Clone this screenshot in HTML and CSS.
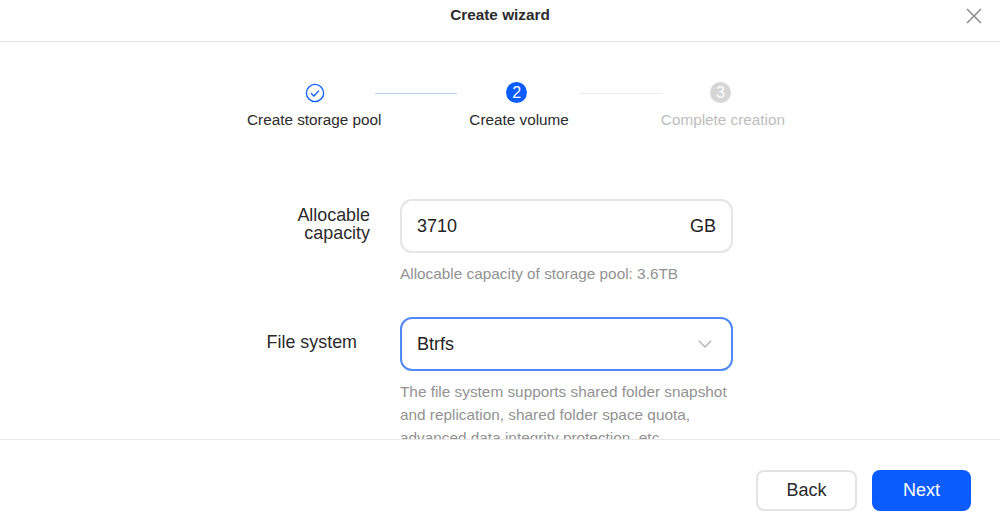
FILE: index.html
```html
<!DOCTYPE html>
<html lang="en">
<head>
<meta charset="utf-8">
<title>Create wizard</title>
<link rel="stylesheet" href="styles.css">
</head>
<body>
<div class="dialog">
  <header class="header">
    <h1 class="title">Create wizard</h1>
    <button class="close" aria-label="Close">
      <svg width="16" height="16" viewBox="0 0 16 16"><path d="M1 1 15 15M15 1 1 15" fill="none" stroke="#8a8a8a" stroke-width="1.5"/></svg>
    </button>
  </header>
  <main class="content">
    <div class="stepper">
      <div class="step">
        <svg class="step-icon" width="20" height="20" viewBox="0 0 20 20"><circle cx="10" cy="10" r="8.6" fill="none" stroke="#0a5cff" stroke-width="1.3"/><path d="M6 10.3 8.9 13 14 7.6" fill="none" stroke="#0a5cff" stroke-width="1.3"/></svg>
        <span class="step-label">Create storage pool</span>
      </div>
      <div class="connector connector-done"></div>
      <div class="step">
        <span class="step-num step-num-active">2</span>
        <span class="step-label">Create volume</span>
      </div>
      <div class="connector connector-todo"></div>
      <div class="step">
        <span class="step-num step-num-todo">3</span>
        <span class="step-label step-label-todo">Complete creation</span>
      </div>
    </div>
    <div class="form">
      <div class="row row-capacity">
        <label class="label">Allocable capacity</label>
        <div class="control">
          <div class="field"><span>3710</span><span>GB</span></div>
          <p class="hint">Allocable capacity of storage pool: 3.6TB</p>
        </div>
      </div>
      <div class="row">
        <label class="label label-fs">File system</label>
        <div class="control">
          <div class="field field-focus"><span>Btrfs</span>
            <svg width="14" height="8" viewBox="0 0 14 8"><path d="M.8.8 7 7 13.2.8" fill="none" stroke="#b5b5b5" stroke-width="1.4"/></svg>
          </div>
          <p class="hint hint-fs">The file system supports shared folder snapshot and replication, shared folder space quota, advanced data integrity protection, etc.</p>
        </div>
      </div>
    </div>
  </main>
  <footer class="footer">
    <button class="btn btn-back">Back</button>
    <button class="btn btn-next">Next</button>
  </footer>
</div>
</body>
</html>
```
FILE: styles.css
```css
* { box-sizing: border-box; }
html, body { margin: 0; height: 100%; overflow: hidden; }
body { font-family: "Liberation Sans", Arial, sans-serif; background: #fff; color: #2b2b2b; }
.dialog { width: 1000px; height: 531px; display: flex; flex-direction: column; }
.header { height: 42px; flex: none; border-bottom: 1px solid #e4e4e4; display: flex; align-items: flex-start; justify-content: center; position: relative; }
.title { margin: 6px 0 0; font-size: 15.3px; line-height: 18px; font-weight: 700; color: #2b2b2b; }
.close { position: absolute; top: 8px; right: 18px; width: 16px; height: 16px; padding: 0; border: 0; background: none; display: block; }
.close svg { display: block; }
.content { flex: none; height: 397px; overflow: hidden; }
.stepper { display: flex; justify-content: flex-start; padding: 40px 0 0 247px; }
.step { display: flex; flex-direction: column; align-items: center; flex: none; }
.step-icon { display: block; margin: 1px 0 0 1px; }
.step-num { width: 21px; height: 21px; margin-right: 5px; border-radius: 50%; font-size: 16px; line-height: 21px; text-align: center; color: #fff; display: block; }
.step-num-active { background: #0a5cff; }
.step-num-todo { background: #d6d6d6; }
.step-label { margin-top: 8px; font-size: 15.3px; line-height: 18px; white-space: nowrap; color: #2b2b2b; }
.step-label-todo { color: #bdbdbd; }
.connector { height: 1px; width: 82px; margin-top: 11px; flex: none; }
.connector-done { background: #b8d0ff; margin-left: -6px; margin-right: 12px; }
.connector-todo { background: #ececec; margin-left: 11px; margin-right: -1px; }
.form { padding: 70px 0 0; }
.row { display: grid; grid-template-columns: 370px 333px; column-gap: 30px; }
.row-capacity { margin-bottom: 32px; }
.label { font-size: 17.9px; line-height: 18px; text-align: right; padding: 7px 0 0 280px; color: #2b2b2b; }
.label-fs { padding: 16px 13px 0 0; }
.field { height: 54px; border: 2px solid #e5e5e5; border-radius: 12px; display: flex; align-items: center; justify-content: space-between; padding: 0 15px; font-size: 18px; color: #222; }
.field-focus { border-color: #5089f6; padding-right: 19px; }
.hint { margin: 9px 0 0; font-size: 15.35px; line-height: 23px; color: #929292; }
.footer { flex: 1; border-top: 1px solid #e8e8e8; display: flex; justify-content: flex-end; gap: 15px; padding: 30px 29px 0 0; align-items: flex-start; }
.btn { width: 101px; height: 41px; border-radius: 8px; font-family: inherit; font-size: 18px; padding: 0; }
.btn-back { background: #fff; border: 2px solid #e3e3e3; color: #2b2b2b; }
.btn-next { width: 99px; background: #0a5cff; border: 0; color: #fff; }
```
